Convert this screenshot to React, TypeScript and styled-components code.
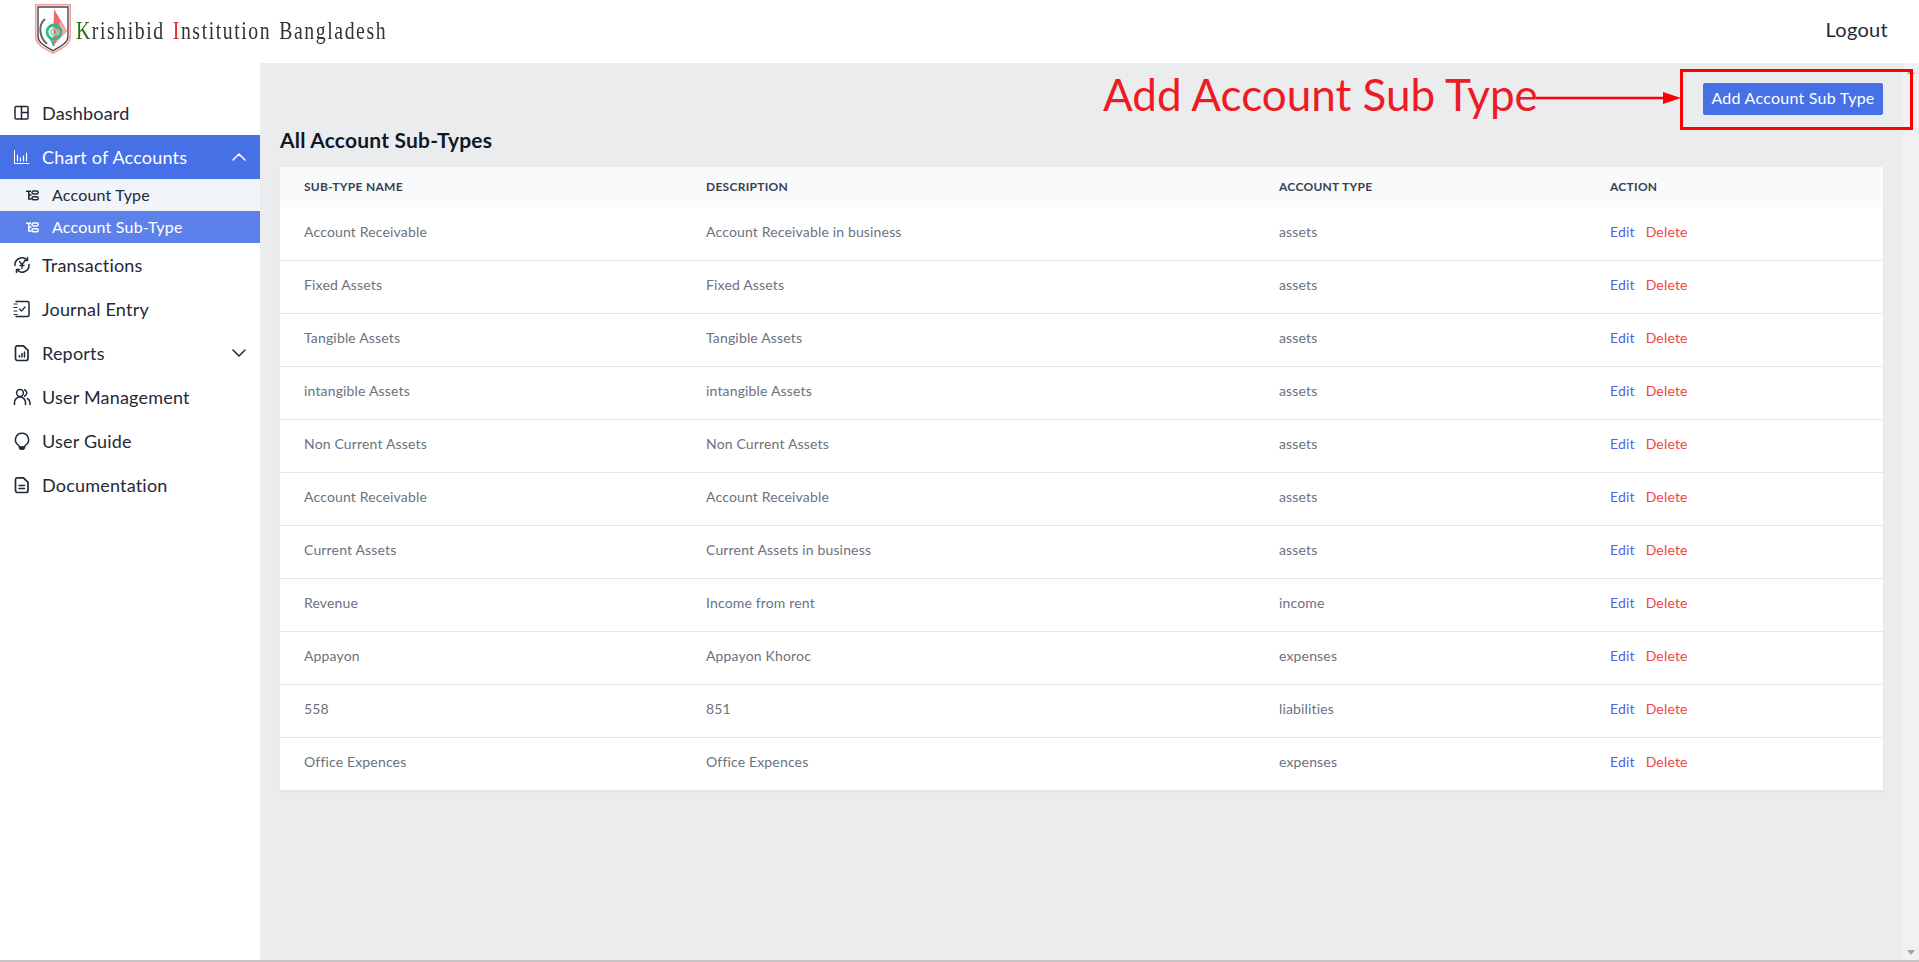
import React from 'react';
import styled, { createGlobalStyle } from 'styled-components';

const GlobalStyle = createGlobalStyle`
  html, body {
    margin: 0;
    padding: 0;
    height: 100%;
    overflow: hidden;
    background: #fff;
  }
  body {
    font-family: "Lato", "Noto Sans", sans-serif;
    color: #111827;
  }
  * { box-sizing: border-box; }
`;

const Page = styled.div`
  position: relative;
  height: 962px;
  display: flex;
  flex-direction: column;
  border-bottom: 2px solid #c8c2c3;
`;

const Header = styled.header`
  height: 63px;
  flex: none;
  display: flex;
  align-items: center;
  justify-content: space-between;
  padding: 0 31px 5px 35px;
  background: #fff;
`;

const Brand = styled.div`
  display: flex;
  align-items: center;
  gap: 5px;
  filter: blur(0.35px);
`;

const BrandName = styled.span`
  font-family: "Liberation Serif", serif;
  font-size: 26px;
  letter-spacing: 2.06px;
  word-spacing: 2px;
  color: #333;
  transform: scaleX(0.76);
  transform-origin: left center;
  white-space: nowrap;
  margin-top: 4px;
`;

const BrandLetter = styled.span<{ $color: string }>`
  color: ${p => p.$color};
`;

const Logout = styled.a`
  font-size: 20px;
  letter-spacing: 0.3px;
  color: #1f2937;
`;

const Body = styled.div`
  flex: 1;
  min-height: 0;
  display: flex;
`;

const Sidebar = styled.nav`
  width: 260px;
  flex: none;
  padding-top: 28px;
  background: #fff;
`;

const NavItem = styled.a<{ $active?: boolean }>`
  height: 44px;
  display: flex;
  align-items: center;
  padding: 0 14px 0 13px;
  font-size: 18px;
  letter-spacing: 0.2px;
  color: ${p => (p.$active ? '#fff' : '#1f2937')};
  background: ${p => (p.$active ? '#4570e6' : 'transparent')};
`;

const LeadIcon = styled.svg.attrs({ viewBox: '0 0 18 18' })`
  width: 18px;
  height: 18px;
  margin-right: 11px;
  flex: none;
  fill: none;
  stroke: currentColor;
  stroke-width: 1.5;
  stroke-linecap: round;
  stroke-linejoin: round;
`;

const Caret = styled.svg.attrs({ viewBox: '0 0 14 8' })`
  width: 14px;
  height: 8px;
  margin-left: auto;
  fill: none;
  stroke: currentColor;
  stroke-width: 1.5;
  stroke-linecap: round;
  stroke-linejoin: round;
`;

const SubList = styled.div`
  background: #f1f4f9;
`;

const SubItem = styled.a<{ $active?: boolean }>`
  height: 32px;
  display: flex;
  align-items: center;
  padding: 0 0 2px 26px;
  font-size: 16px;
  letter-spacing: 0.2px;
  color: ${p => (p.$active ? '#fff' : '#1f2937')};
  background: ${p => (p.$active ? '#5c81ea' : 'transparent')};
`;

const TreeIcon = styled.svg.attrs({ viewBox: '0 0 13 11' })`
  width: 13px;
  height: 11px;
  margin: 2px 13px 0 0;
  fill: none;
  stroke: currentColor;
  stroke-width: 1.5;
`;

const Main = styled.main`
  flex: 1;
  min-width: 0;
  padding: 20px 20px 0;
  background: #ebecee;
`;

const Toolbar = styled.div`
  display: flex;
  justify-content: flex-end;
`;

const AddButton = styled.button`
  width: 180px;
  height: 32px;
  padding: 0 0 3px;
  border: 0;
  border-radius: 2px;
  background: #4570e6;
  color: #fff;
  font: inherit;
  font-size: 16px;
  letter-spacing: 0.25px;
`;

const Title = styled.h2`
  margin: 11px 0 13px;
  font-size: 21px;
  line-height: 28px;
  font-weight: 700;
  letter-spacing: 0.2px;
  color: #111827;
`;

const Table = styled.table`
  width: 1603px;
  border-collapse: collapse;
  table-layout: fixed;
  background: #fff;
  box-shadow: 0 1px 2px rgba(0, 0, 0, 0.05);
`;

const Th = styled.th<{ $width: number }>`
  width: ${p => p.$width}px;
  height: 40px;
  padding: 0 24px 2px;
  background: #f9fafb;
  text-align: left;
  font-size: 12px;
  font-weight: 700;
  letter-spacing: 0.28px;
  text-transform: uppercase;
  color: #374151;
`;

const Tr = styled.tr`
  height: 53px;
  border-bottom: 1px solid #e5e7eb;
`;

const Td = styled.td`
  padding: 0 24px 4px;
  font-size: 14px;
  letter-spacing: 0.16px;
  color: #6b7280;
`;

const ActionLink = styled.a<{ $danger?: boolean }>`
  margin-right: 11px;
  color: ${p => (p.$danger ? '#ef4444' : '#4f63e7')};
`;

const Scrollbar = styled.div`
  width: 16px;
  flex: none;
  display: flex;
  flex-direction: column;
  justify-content: space-between;
  align-items: center;
  padding: 6px 0 5px;
  background: #f1f1f1;
`;

const ScrollArrow = styled.svg`
  width: 8px;
  height: 5px;
  fill: #a3a3a3;
`;

// the red callout drawn over the screenshot
const CalloutBox = styled.div`
  position: absolute;
  left: 1680px;
  top: 69px;
  width: 233px;
  height: 61px;
  border: 3px solid #f00;
`;

const CalloutText = styled.span`
  position: absolute;
  left: 1103px;
  top: 66px;
  font-size: 44px;
  line-height: 56px;
  color: #ed1c24;
  white-space: nowrap;
`;

const CalloutArrow = styled.svg`
  position: absolute;
  left: 1536px;
  top: 90px;
  width: 145px;
  height: 16px;
`;

const rows = [
  ['Account Receivable', 'Account Receivable in business', 'assets'],
  ['Fixed Assets', 'Fixed Assets', 'assets'],
  ['Tangible Assets', 'Tangible Assets', 'assets'],
  ['intangible Assets', 'intangible Assets', 'assets'],
  ['Non Current Assets', 'Non Current Assets', 'assets'],
  ['Account Receivable', 'Account Receivable', 'assets'],
  ['Current Assets', 'Current Assets in business', 'assets'],
  ['Revenue', 'Income from rent', 'income'],
  ['Appayon', 'Appayon Khoroc', 'expenses'],
  ['558', '851', 'liabilities'],
  ['Office Expences', 'Office Expences', 'expenses'],
];

const Logo = () => (
  <svg width="36" height="50" viewBox="0 0 36 50">
    <path d="M.8.8H35.200V33C35.200 41 25 45 18 49.200C11 45 .8 41 .8 33Z" fill="#fff" stroke="#f29c9c" strokeWidth="1.500" />
    <path d="M3 3H33V32.500C33 39.500 24 43 18 46.800C12 43 3 39.500 3 32.500Z" fill="#fff" stroke="#4a4a4a" strokeWidth="1.400" />
    <path d="M19 5L32 27L18 42Z" fill="#ef6a6e" />
    <path d="M25 17L32 27L21 39Z" fill="#f8a9a9" />
    <circle cx="19" cy="28" r="7" fill="none" stroke="#2dbb8b" strokeWidth="2.800" />
    <circle cx="19" cy="28" r="3" fill="none" stroke="#7fdcbc" strokeWidth="1.600" />
    <path d="M15 34C17 37 18 39 19 42" fill="none" stroke="#2dbb8b" strokeWidth="2" />
    <path d="M10 15C3 21 4 33 12 40" fill="none" stroke="#666" strokeWidth="2" />
  </svg>
);

const ChevronUp = () => (
  <Caret><path d="M1 7L7 1L13 7" /></Caret>
);

const ChevronDown = () => (
  <Caret><path d="M1 1L7 7L13 1" /></Caret>
);

const Tree = () => (
  <TreeIcon>
    <path d="M0 1.200H5M2.800 1.200V9H5.500M2.800 5H5.500" />
    <rect x="6" y="1" width="6.200" height="3" rx="1.400" />
    <rect x="6" y="6.800" width="6.200" height="3" rx="1.400" />
  </TreeIcon>
);

const App: React.FC = () => {
  return (
    <>
      <GlobalStyle />
      <Page>
        <Header>
          <Brand>
            <Logo />
            <BrandName>
              <BrandLetter $color="#2f6b12">K</BrandLetter>rishibid{' '}
              <BrandLetter $color="#e1262c">I</BrandLetter>nstitution Bangladesh
            </BrandName>
          </Brand>
          <Logout>Logout</Logout>
        </Header>
        <Body>
          <Sidebar>
            <NavItem>
              <LeadIcon strokeWidth="2">
                <rect x="2" y="2.500" width="13" height="12.500" rx="1" />
                <path d="M8.500 2.500V15M8.500 8.500H15" />
              </LeadIcon>
              Dashboard
            </NavItem>
            <NavItem $active>
              <LeadIcon>
                <path d="M1.500 2.500V15.500H16" strokeWidth="1" />
                <path d="M4.500 13V7M7.500 13V10M10.500 13V8M13.500 13V5" strokeWidth="1.200" />
              </LeadIcon>
              Chart of Accounts
              <ChevronUp />
            </NavItem>
            <SubList>
              <SubItem><Tree />Account Type</SubItem>
              <SubItem $active><Tree />Account Sub-Type</SubItem>
            </SubList>
            <NavItem>
              <LeadIcon>
                <path d="M2 9.500A7 7 0 0 1 14 4M16 8.500A7 7 0 0 1 4 14" />
                <path d="M14.500 1.500V4.500H11.500M3.500 16.500V13.500H6.500" />
                <path d="M6.500 5.500L9 8.500L11.500 5.500M9 8.500V12.500M7 9.500H11" strokeWidth="1.300" />
              </LeadIcon>
              Transactions
            </NavItem>
            <NavItem>
              <LeadIcon>
                <path d="M3 1.500H14.500A1.500 1.500 0 0 1 16 3V15A1.500 1.500 0 0 1 14.500 16.500H3" />
                <path d="M1 4H4M1 7.500H4M1 11H4M1 14.500H4" strokeWidth="1.200" />
                <path d="M6.500 9L8.500 11L12 7" strokeWidth="1.200" />
              </LeadIcon>
              Journal Entry
            </NavItem>
            <NavItem>
              <LeadIcon>
                <path d="M4 1.800H10.500L15 6.300V14.500A2 2 0 0 1 13 16.500H4A2 2 0 0 1 2.500 14.500V3.500A2 2 0 0 1 4 1.800Z" strokeWidth="1.700" />
                <path d="M6.500 13V11.500M9 13V9.500M11.500 13V8" strokeWidth="1.500" />
              </LeadIcon>
              Reports
              <ChevronDown />
            </NavItem>
            <NavItem>
              <LeadIcon>
                <circle cx="7" cy="5" r="3.400" />
                <path d="M1.500 16.500V14.500A5.500 5.500 0 0 1 12.500 14.500V16.500" />
                <path d="M11.500 1.800A3.400 3.400 0 0 1 11.500 8.200M14.500 10.500A5.500 5.500 0 0 1 17 14.500V16.500" />
              </LeadIcon>
              User Management
            </NavItem>
            <NavItem>
              <LeadIcon>
                <path d="M9 1.200A6.500 6.500 0 0 0 5.200 13C6 13.600 6.300 14.200 6.400 15H11.600C11.700 14.200 12 13.600 12.800 13A6.500 6.500 0 0 0 9 1.200Z" />
                <path d="M6.500 15.500H11.500V15.800A1.500 1.500 0 0 1 10 17.200H8A1.500 1.500 0 0 1 6.500 15.800Z" fill="currentColor" />
              </LeadIcon>
              User Guide
            </NavItem>
            <NavItem>
              <LeadIcon>
                <path d="M4 1.800H10.500L15 6.300V14.500A2 2 0 0 1 13 16.500H4A2 2 0 0 1 2.500 14.500V3.500A2 2 0 0 1 4 1.800Z" strokeWidth="1.700" />
                <path d="M6 9.500H11.500M6 12.500H11.500" strokeWidth="1.400" />
              </LeadIcon>
              Documentation
            </NavItem>
          </Sidebar>
          <Main>
            <Toolbar>
              <AddButton>Add Account Sub Type</AddButton>
            </Toolbar>
            <Title>All Account Sub-Types</Title>
            <Table>
              <thead>
                <tr>
                  <Th $width={402}>Sub-Type Name</Th>
                  <Th $width={573}>Description</Th>
                  <Th $width={331}>Account Type</Th>
                  <Th $width={297}>Action</Th>
                </tr>
              </thead>
              <tbody>
                {rows.map((row, i) => (
                  <Tr key={i}>
                    <Td>{row[0]}</Td>
                    <Td>{row[1]}</Td>
                    <Td>{row[2]}</Td>
                    <Td>
                      <ActionLink>Edit</ActionLink>
                      <ActionLink $danger>Delete</ActionLink>
                    </Td>
                  </Tr>
                ))}
              </tbody>
            </Table>
          </Main>
          <Scrollbar>
            <ScrollArrow viewBox="0 0 8 5"><path d="M4 0L8 5H0Z" /></ScrollArrow>
            <ScrollArrow viewBox="0 0 8 5"><path d="M0 0H8L4 5Z" /></ScrollArrow>
          </Scrollbar>
        </Body>
        <CalloutText>Add Account Sub Type</CalloutText>
        <CalloutArrow viewBox="0 0 145 16">
          <path d="M0 8H130" stroke="#f00" strokeWidth="2.500" />
          <path d="M127 2L145 8L127 14Z" fill="#f00" />
        </CalloutArrow>
        <CalloutBox />
      </Page>
    </>
  );
};

export default App;
